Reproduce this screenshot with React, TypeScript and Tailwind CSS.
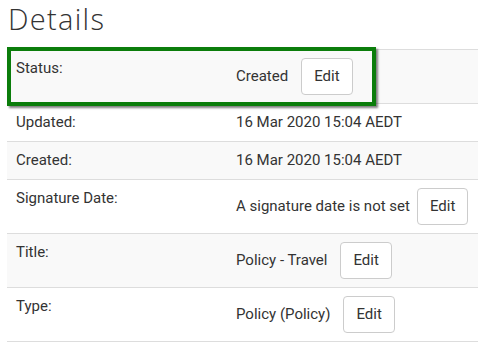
const rows: { label: string; value: string; edit?: boolean; gap?: string }[] = [
  { label: 'Status:', value: 'Created', edit: true },
  { label: 'Updated:', value: '16 Mar 2020 15:04 AEDT' },
  { label: 'Created:', value: '16 Mar 2020 15:04 AEDT' },
  { label: 'Signature Date:', value: 'A signature date is not set', edit: true, gap: 'ml-[7px]' },
  { label: 'Title:', value: 'Policy - Travel', edit: true },
  { label: 'Type:', value: 'Policy (Policy)', edit: true },
];

function EditButton({ className = 'ml-[13px]' }: { className?: string }) {
  return (
    <button className={`${className} h-[37px] px-[12px] border border-[#cccccc] rounded-[4px] bg-white text-[#333333] text-[15px] leading-[21px]`}>
      Edit
    </button>
  );
}

export default function App() {
  return (
    <div className="w-[478px] h-[345px] overflow-hidden bg-white text-[#333333]" style={{ fontFamily: 'Roboto, "Liberation Sans", sans-serif' }}>
      <h1
        className="pl-[8px] pt-[1px] text-[29px] leading-[36px] font-light tracking-[1.3px] text-[#333333]"
        style={{ fontFamily: '"Open Sans", "Liberation Sans", sans-serif' }}
      >
        Details
      </h1>
      <div className="relative ml-[7px] mt-[12px] w-[471px]">
        {rows.map((row, i) => (
          <div
            key={row.label}
            className={`flex border-t border-[#dddddd] ${i % 2 === 0 ? 'bg-[#f9f9f9]' : 'bg-white'} ${i === rows.length - 1 ? 'border-b' : ''}`}
          >
            <div className="w-[229px] shrink-0 pl-[9px] py-[8px] text-[15px] leading-[21px]">{row.label}</div>
            <div className="flex items-baseline py-[8px] text-[15px] leading-[21px]">
              <span>{row.value}</span>
              {row.edit && <EditButton className={row.gap ?? 'ml-[13px]'} />}
            </div>
          </div>
        ))}
        {/* highlight around the status row */}
        <div className="absolute left-0 top-[-2px] w-[369px] h-[59px] border-[4px] border-[#0b7d0b] shadow-[2px_2px_2px_rgba(0,0,0,0.5)] pointer-events-none" />
      </div>
    </div>
  );
}
